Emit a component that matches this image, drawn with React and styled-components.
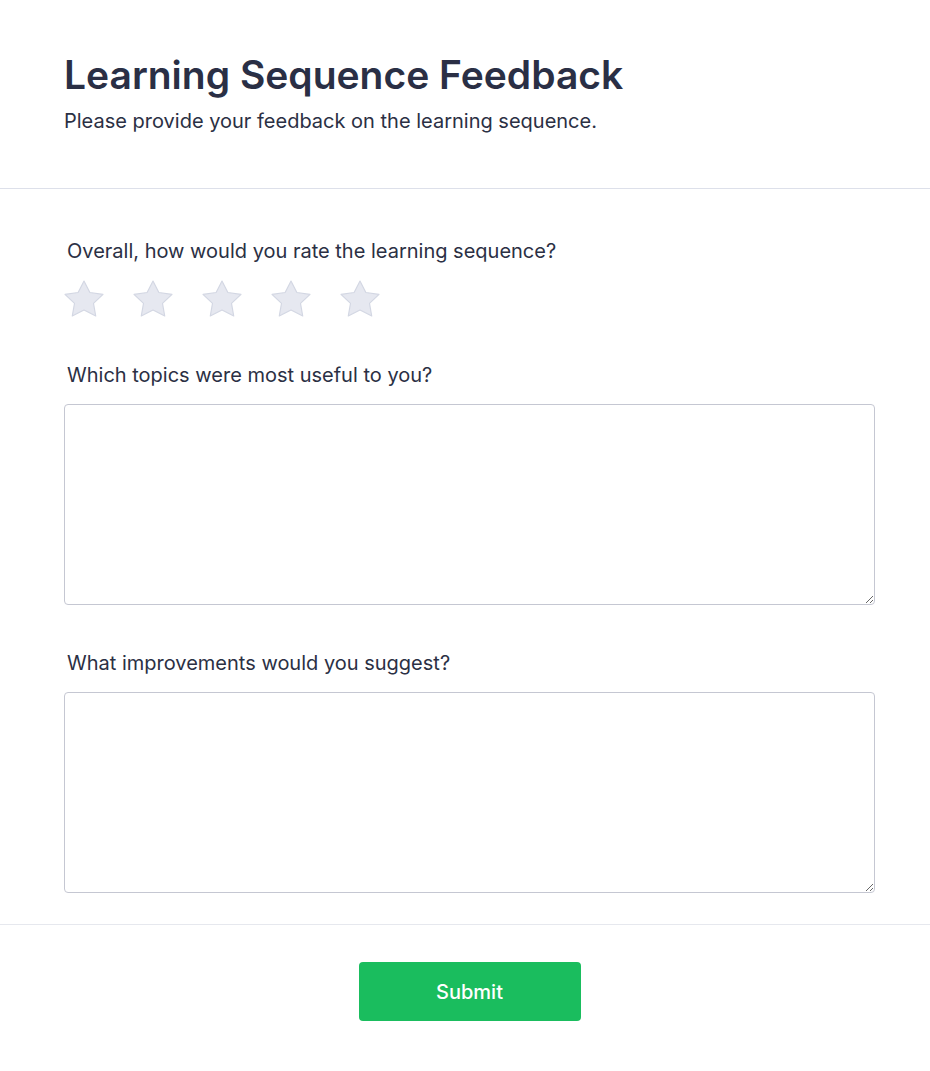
import React, { useState } from "react";
import styled, { createGlobalStyle } from "styled-components";

const GlobalStyle = createGlobalStyle`
  body {
    margin: 0;
    background: #ffffff;
    font-family: Inter, "Noto Sans", sans-serif;
    color: #2b3044;
  }
`;

const Page = styled.div`
  width: 100%;
  min-height: 1071px;
  background: #ffffff;
`;

const Header = styled.header`
  padding: 51px 55px 53px 64px;
  border-bottom: 1px solid #dde0ea;
`;

const Title = styled.h1`
  margin: 0;
  font-size: 39px;
  line-height: 48px;
  font-weight: 600;
  color: #2a2f45;
`;

const Subtitle = styled.p`
  margin: 8px 0 0;
  font-size: 20px;
  line-height: 28px;
  font-weight: 400;
  color: #2b3044;
`;

const Body = styled.form`
  padding: 48px 55px 31px 64px;
  display: flex;
  flex-direction: column;
  gap: 44px;
  border-bottom: 1px solid #e6e8ee;
`;

const Field = styled.div`
  display: flex;
  flex-direction: column;
  gap: 15px;
`;

const Label = styled.label`
  padding-left: 3px;
  font-size: 20px;
  line-height: 28px;
  font-weight: 400;
  color: #2b3044;
`;

const Stars = styled.div`
  display: flex;
  gap: 31px;
  height: 37px;
  padding-left: 1px;
  align-items: center;
`;

const StarButton = styled.button`
  padding: 0;
  border: none;
  background: none;
  cursor: pointer;
  display: flex;
  svg {
    overflow: visible;
  }
`;

const TextArea = styled.textarea`
  box-sizing: border-box;
  width: 100%;
  height: 201px;
  border: 1px solid #c5c7d2;
  border-radius: 4px;
  padding: 10px 12px;
  font-family: Inter, "Noto Sans", sans-serif;
  font-size: 16px;
  color: #2b3044;
  resize: vertical;
  outline: none;
`;

const Footer = styled.footer`
  padding: 37px 55px 50px 64px;
  display: flex;
  justify-content: center;
`;

const SubmitButton = styled.button`
  width: 222px;
  height: 59px;
  border: none;
  border-radius: 4px;
  background: #1abd5e;
  color: #ffffff;
  font-family: Inter, "Noto Sans", sans-serif;
  font-size: 20px;
  font-weight: 500;
  cursor: pointer;
`;

const Star = ({ active }) => (
  <svg width="38" height="35" viewBox="2 2 20 19" preserveAspectRatio="none">
    <polygon
      points="12,2 15.09,8.26 22,9.27 17,14.14 18.18,21.02 12,17.77 5.82,21.02 7,14.14 2,9.27 8.91,8.26"
      fill={active ? "#f6c343" : "#e6e8f0"}
      stroke={active ? "#e5b02c" : "#d3d7e3"}
      strokeWidth="0.6"
      strokeLinejoin="round"
    />
  </svg>
);

const App = () => {
  const [rating, setRating] = useState(0);

  return (
    <Page>
      <GlobalStyle />
      <Header>
        <Title>Learning Sequence Feedback</Title>
        <Subtitle>Please provide your feedback on the learning sequence.</Subtitle>
      </Header>
      <Body onSubmit={(e) => e.preventDefault()}>
        <Field>
          <Label>Overall, how would you rate the learning sequence?</Label>
          <Stars>
            {[1, 2, 3, 4, 5].map((n) => (
              <StarButton type="button" key={n} onClick={() => setRating(n)}>
                <Star active={n <= rating} />
              </StarButton>
            ))}
          </Stars>
        </Field>
        <Field>
          <Label>Which topics were most useful to you?</Label>
          <TextArea />
        </Field>
        <Field>
          <Label>What improvements would you suggest?</Label>
          <TextArea />
        </Field>
      </Body>
      <Footer>
        <SubmitButton type="submit">Submit</SubmitButton>
      </Footer>
    </Page>
  );
};

export default App;
